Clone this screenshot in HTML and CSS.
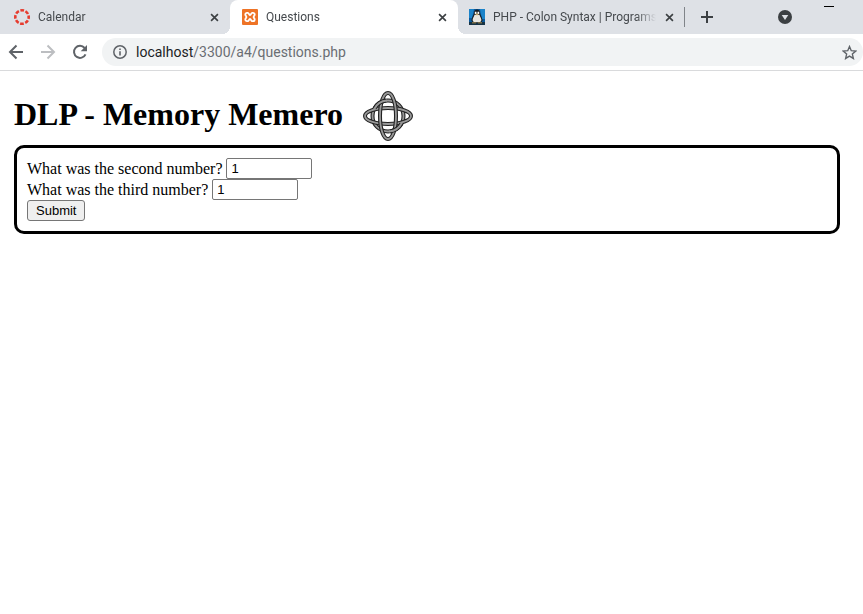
FILE: index.html
```html
<!DOCTYPE html>
<html lang="en">
<head>
<meta charset="utf-8">
<title>Questions</title>
<link rel="stylesheet" href="styles.css">
</head>
<body>
<header class="browser">
  <div class="tabstrip">
    <nav class="tabs" aria-label="Tabs">
      <div class="tab">
        <svg class="favicon" viewBox="0 0 16 16"><circle cx="8" cy="8" r="6.7" fill="none" stroke="#e63c2f" stroke-width="2.6" stroke-dasharray="3.7 1.562" stroke-dashoffset="1.85"/></svg>
        <a class="title" href="#">Calendar</a>
        <button class="close" aria-label="Close Calendar"><svg viewBox="0 0 10 10"><path d="M1.2 1.2l7.6 7.6M8.8 1.2L1.2 8.8"/></svg></button>
      </div>
      <div class="tab active">
        <svg class="favicon" viewBox="0 0 16 16"><rect width="16" height="16" rx="1" fill="#ee7326"/><path d="M5 3.800h.8c1.200 0 1 2.200 2.200 2.200s1-2.200 2.200-2.200h.8a1.700 1.700 0 0 1 1.700 1.700c0 1.300-1.100 1.300-1.100 2.500s1.100 1.200 1.100 2.500a1.700 1.700 0 0 1-1.700 1.700h-.8C9 12.200 9.200 10 8 10s-1 2.200-2.200 2.200H5a1.700 1.700 0 0 1-1.700-1.700c0-1.300 1.100-1.300 1.100-2.500S3.300 6.800 3.300 5.500A1.700 1.700 0 0 1 5 3.800z" fill="none" stroke="#fff" stroke-width="1.800"/></svg>
        <a class="title" href="#">Questions</a>
        <button class="close" aria-label="Close Questions"><svg viewBox="0 0 10 10"><path d="M1.2 1.2l7.6 7.6M8.8 1.2L1.2 8.8"/></svg></button>
      </div>
      <div class="tab">
        <svg class="favicon" viewBox="0 0 16 16"><rect width="16" height="16" fill="#0b5a9c"/><path d="M0 0h5L3 9H0zM11 0h5v10h-3z" fill="#1b83c9"/><path d="M0 13h16v3H0z" fill="#173345"/><path d="M8 .5C5.800.5 5 2.300 4.900 4.300c-.1 2-2.100 3.700-2.500 7.200l2 2.500h7.200l2-2.500c-.4-3.500-2.400-5.200-2.500-7.200C11 2.300 10.200.5 8 .5z" fill="#151b20"/><path d="M5.500 5.800h5c.5 1.900 1.900 3.500 1.900 5.500l-1.200 2H4.800l-1.200-2c0-2 1.400-3.600 1.900-5.500z" fill="#e8e6e0"/><path d="M5.800 2.800h1.700V5H5.800zM8.500 2.800h1.700V5H8.500z" fill="#fff"/><path d="M6 4.800h4L8 6.600z" fill="#d4b264"/><path d="M3 13h4v1.500H3zM9 13h4v1.500H9z" fill="#786b45"/></svg>
        <a class="title" href="#">PHP - Colon Syntax | Programs</a>
        <button class="close" aria-label="Close PHP - Colon Syntax"><svg viewBox="0 0 10 10"><path d="M1.2 1.2l7.6 7.6M8.8 1.2L1.2 8.8"/></svg></button>
      </div>
    </nav>
    <button class="new-tab" aria-label="New tab"><svg viewBox="0 0 12 12"><path d="M6 0v12M0 6h12" stroke="#3c4043" stroke-width="2"/></svg></button>
    <div class="window-tools">
      <button aria-label="Search tabs"><svg class="search-tabs" viewBox="0 0 14 14"><circle cx="7" cy="7" r="7" fill="#3c4043"/><path d="M3.700 5h6.600L7 10z" fill="#dee1e6"/></svg></button>
      <button class="minimize" aria-label="Minimize"><svg viewBox="0 0 10 1"><path d="M0 0h10v1H0z"/></svg></button>
    </div>
  </div>
  <div class="toolbar">
    <button aria-label="Back"><svg class="nav" viewBox="0 0 16 16"><path d="M15 8H2M8.500 1.500L2 8l6.500 6.500" fill="none" stroke="#5f6368" stroke-width="2"/></svg></button>
    <button aria-label="Forward" disabled><svg class="nav" viewBox="0 0 16 16"><path d="M1 8h13M7.500 1.500L14 8l-6.500 6.500" fill="none" stroke="#bcbec1" stroke-width="2"/></svg></button>
    <button aria-label="Reload"><svg class="nav" viewBox="0 0 16 16"><path d="M13.500 10.300A6 6 0 1 1 12.600 4" fill="none" stroke="#5f6368" stroke-width="2"/><path d="M15 1v6.300H8.700z" fill="#5f6368"/></svg></button>
    <div class="address">
      <svg class="info" viewBox="0 0 14 14"><circle cx="7" cy="7" r="6.200" fill="none" stroke="#5f6368" stroke-width="1.500"/><path d="M6.200 6.200h1.600v4.300H6.200zM6.200 3.500h1.600V5H6.200z" fill="#5f6368"/></svg>
      <a class="url" href="#"><span class="host">localhost</span>/3300/a4/questions.php</a>
      <button class="bookmark" aria-label="Bookmark"><svg viewBox="0 0 14 14"><path d="M7 1.400l1.650 3.900 4.200.38-3.180 2.770.96 4.110L7 10.350l-3.630 2.210.96-4.110L1.150 5.680l4.200-.38z" fill="none" stroke="#5f6368" stroke-width="1.300"/></svg></button>
    </div>
  </div>
</header>
<main class="page">
  <div class="heading">
    <h1>DLP - Memory Memero</h1>
    <svg class="emblem" viewBox="0 0 50 50" aria-hidden="true">
      <defs>
        <path id="tall" d="M25 2C29.500 2 33 12 33 25S29.500 48 25 48 17 38 17 25 20.500 2 25 2z"/>
        <path id="wide" d="M2 25C2 20.500 12 17 25 17S48 20.500 48 25 38 33 25 33 2 29.500 2 25z"/>
        <circle id="ring" cx="25" cy="25" r="15.500"/>
      </defs>
      <g fill="none">
        <use href="#ring" stroke="#222" stroke-width="4"/>
        <use href="#ring" stroke="#989898" stroke-width="1.800"/>
        <use href="#wide" stroke="#222" stroke-width="4"/>
        <use href="#wide" stroke="#989898" stroke-width="1.800"/>
        <use href="#tall" stroke="#222" stroke-width="4"/>
        <use href="#tall" stroke="#989898" stroke-width="1.800"/>
        <path d="M27 40.400A15.500 15.500 0 0 0 38.500 32.600M23 9.600A15.500 15.500 0 0 0 11.500 17.400" stroke="#222" stroke-width="4"/>
        <path d="M26 40.500A15.500 15.500 0 0 0 39 31.500M24 9.500A15.500 15.500 0 0 0 11 18.500" stroke="#989898" stroke-width="1.800"/>
      </g>
    </svg>
  </div>
  <form class="questions">
    <div class="row"><label for="second">What was the second number?</label><input id="second" type="text" value="1"></div>
    <div class="row"><label for="third">What was the third number?</label><input id="third" type="text" value="1"></div>
    <div class="row"><button class="submit" type="button">Submit</button></div>
  </form>
</main>
</body>
</html>
```
FILE: styles.css
```css
* { box-sizing: border-box; }
body {
  margin: 0;
  background: #fff;
  color: #000;
  font-family: "Liberation Serif", serif;
}
svg { display: block; flex: none; }
a { color: inherit; text-decoration: none; }

.browser {
  font-family: Roboto, "Open Sans", sans-serif;
  border-bottom: 1px solid #d9dadc;
}
.browser button {
  display: grid;
  place-items: center;
  flex: none;
  padding: 0;
  border: 0;
  background: none;
}

.tabstrip {
  display: flex;
  height: 34px;
  background: #dee1e6;
}
.tabs { display: flex; flex: 0 1 685px; min-width: 0; padding-left: 2px; }
.tab {
  position: relative;
  display: flex;
  align-items: center;
  flex: 1 1 0;
  min-width: 0;
  gap: 8px;
  padding: 0 11px 0 12px;
  color: #45494d;
  font-size: 12px;
}
.tab:last-child { padding-left: 11px; }
.tab:last-child::after {
  content: "";
  position: absolute;
  right: 0;
  top: 7px;
  width: 1px;
  height: 20px;
  background: #808489;
}
.tab.active {
  z-index: 1;
  background: #fff;
  border-radius: 8px 8px 0 0;
}
.tab.active::before,
.tab.active::after {
  content: "";
  position: absolute;
  bottom: 0;
  width: 8px;
  height: 8px;
}
.tab.active::before {
  right: 100%;
  background: radial-gradient(circle at 0 0, transparent 8px, #fff 8px);
}
.tab.active::after {
  left: 100%;
  background: radial-gradient(circle at 100% 0, transparent 8px, #fff 8px);
}
.favicon { width: 16px; height: 16px; }
.title {
  flex: 1;
  min-width: 0;
  overflow: hidden;
  white-space: nowrap;
  -webkit-mask-image: linear-gradient(to left, transparent, #000 20px);
  mask-image: linear-gradient(to left, transparent, #000 20px);
}
.close { width: 10px; height: 16px; }
.close svg { width: 9px; height: 9px; stroke: #3c4043; stroke-width: 1.8; fill: none; }
.new-tab { width: 44px; }
.new-tab svg { width: 12px; height: 12px; }
.window-tools {
  display: flex;
  flex: 1;
  justify-content: flex-end;
  gap: 32px;
  padding-right: 29px;
}
.search-tabs { width: 14px; height: 14px; }
.window-tools .minimize { align-self: flex-start; height: 13px; }
.minimize svg { width: 10px; height: 1px; }

.toolbar { display: flex; align-items: center; height: 36px; padding-left: 8px; }
.toolbar > button { width: 16px; margin-right: 16px; }
.nav { width: 16px; height: 16px; }
.address {
  display: flex;
  align-items: center;
  flex: 1;
  min-width: 0;
  height: 28px;
  margin-left: -2px;
  padding: 0 6px 0 11px;
  border-radius: 14px;
  background: #f1f3f4;
  color: #6a6e73;
  font-size: 14px;
}
.info { width: 14px; height: 14px; margin-right: 9px; }
.url { flex: 1; min-width: 0; overflow: hidden; white-space: nowrap; }
.host { color: #202124; }
.bookmark svg { width: 15px; height: 15px; }

.page { padding: 20px 23px 20px 14px; }
.heading { display: flex; align-items: center; gap: 20px; margin-bottom: 4px; }
h1 { margin: 0; padding-bottom: 4px; font-size: 32px; line-height: 36px; }
.emblem { width: 50px; height: 50px; }
.questions {
  padding: 10px;
  border: 3px solid #000;
  border-radius: 10px;
  font-size: 16px;
}
.row { display: flex; align-items: center; gap: 4px; height: 21px; }
.row input {
  width: 86px;
  height: 21px;
  padding: 1px 4px;
  border: 1px solid #767676;
  border-radius: 2px;
  background: #fff;
  color: #000;
  font: 13px "Liberation Sans", sans-serif;
}
.submit {
  height: 21px;
  padding: 1px 8px;
  border: 1px solid #767676;
  border-radius: 3px;
  background: #efefef;
  color: #000;
  font: 13px "Liberation Sans", sans-serif;
}
```
